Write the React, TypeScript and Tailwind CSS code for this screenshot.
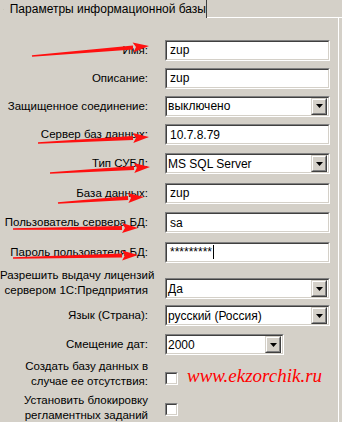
import React from "react";

// arrows drawn over the form: [x1, y1, x2, y2]
const arrows: [number, number, number, number][] = [
  [32, 56, 149, 46],
  [38, 143, 149, 137],
  [50, 173, 150, 167],
  [58, 203, 144, 197],
  [13, 229, 138, 228],
  [13, 258, 138, 255],
];

const arrowShape = ([x1, y1, x2, y2]: [number, number, number, number]) => {
  const dx = x2 - x1;
  const dy = y2 - y1;
  const len = Math.hypot(dx, dy);
  const ux = dx / len;
  const uy = dy / len;
  const nx = -uy;
  const ny = ux;
  const headLen = 16;
  const bx = x2 - ux * headLen;
  const by = y2 - uy * headLen;
  const p = (x: number, y: number) => `${x.toFixed(1)},${y.toFixed(1)}`;
  const shaft = [
    p(x1 + nx * 0.8, y1 + ny * 0.8),
    p(bx + nx * 2, by + ny * 2),
    p(bx - nx * 2, by - ny * 2),
    p(x1 - nx * 0.8, y1 - ny * 0.8),
  ].join(" ");
  const head = [p(x2, y2), p(bx + nx * 5, by + ny * 5), p(bx + ux * 3, by + uy * 3), p(bx - nx * 5, by - ny * 5)].join(" ");
  return { shaft, head };
};

const Sunken = ({ className, children }: { className: string; children?: React.ReactNode }) => (
  <div className={`border border-t-[#808080] border-l-[#808080] border-r-white border-b-white ${className}`}>
    <div className="flex h-[19px] items-center border border-t-[#404040] border-l-[#404040] border-r-[#d4d0c8] border-b-[#d4d0c8] bg-white">
      {children}
    </div>
  </div>
);

const TextField = ({ value, caret }: { value: string; caret?: boolean }) => (
  <Sunken className="w-[165px]">
    <span className="pl-[3px] text-[12px] leading-none text-[#000]">{value}</span>
    {caret && <span className="ml-px h-[14px] w-px bg-black" />}
  </Sunken>
);

const DropBtn = () => (
  <div className="mr-px flex h-[17px] w-[16px] items-center justify-center border border-t-[#d4d0c8] border-l-[#d4d0c8] border-r-[#404040] border-b-[#404040] bg-[#d4d0c8]">
    <div className="flex h-full w-full items-center justify-center border border-t-white border-l-white border-r-[#808080] border-b-[#808080]">
      <svg width="7" height="4" viewBox="0 0 7 4">
        <path d="M0 0h7L3.5 4z" fill="#000" />
      </svg>
    </div>
  </div>
);

const Select = ({ value, narrow }: { value: string; narrow?: boolean }) => (
  <Sunken className={narrow ? "w-[119px]" : "w-[165px]"}>
    <span className="flex-1 whitespace-nowrap pl-px text-[12px] leading-none">{value}</span>
    <DropBtn />
  </Sunken>
);

const Check = () => (
  <div className="h-[13px] w-[13px] border border-t-[#808080] border-l-[#808080] border-r-white border-b-white">
    <div className="h-full w-full border border-t-[#404040] border-l-[#404040] border-r-[#d4d0c8] border-b-[#d4d0c8] bg-white" />
  </div>
);

const Row = ({ h, label, children }: { h: string; label: React.ReactNode; children: React.ReactNode }) => (
  <div className={`flex items-center ${h}`}>
    <div className="w-[150px] whitespace-nowrap pr-[2px] text-right leading-[15px]">{label}</div>
    <div className="ml-[15px]">{children}</div>
  </div>
);

export default function App() {
  return (
    <div
      className="relative h-[422px] w-[342px] overflow-hidden bg-[#d4d0c8] text-[11.5px] text-black"
      style={{ fontFamily: '"Liberation Sans", Arial, sans-serif' }}
    >
      {/* tab strip */}
      <div className="flex h-[18px]">
        <div className="flex w-[207px] items-center border-r border-r-[#404040] pl-[3px]">
          <svg width="16" height="15" viewBox="0 0 16 15" className="mr-[6px]">
            <rect x="1.5" y="0.5" width="13" height="14" fill="none" stroke="#555" strokeDasharray="1 1" />
            <rect x="3" y="2" width="4" height="4" fill="#e8d83a" />
            <rect x="4" y="3" width="2" height="2" fill="#8a7a10" />
            <rect x="7" y="6" width="5" height="3" fill="#3aa0a0" />
            <rect x="3" y="9" width="4" height="4" fill="#e8d83a" />
            <rect x="8" y="9" width="4" height="4" fill="#2a6ab0" />
            <rect x="9" y="2" width="3" height="3" fill="#b8c8c8" />
          </svg>
          <span className="whitespace-nowrap text-[12px]">Параметры информационной базы</span>
        </div>
        <div className="flex-1 border-b border-b-white" />
      </div>

      <div className="mr-[3px] border-r border-r-white pt-[18px]">
        <Row h="h-[28px]" label="Имя:">
          <TextField value="zup" />
        </Row>
        <Row h="h-[28px]" label="Описание:">
          <TextField value="zup" />
        </Row>
        <Row h="h-[28px]" label="Защищенное соединение:">
          <Select value="выключено" />
        </Row>
        <Row h="h-[29px]" label="Сервер баз данных:">
          <TextField value="10.7.8.79" />
        </Row>
        <Row h="h-[29px]" label="Тип СУБД:">
          <Select value="MS SQL Server" />
        </Row>
        <Row h="h-[30px]" label="База данных:">
          <TextField value="zup" />
        </Row>
        <Row h="h-[29px]" label="Пользователь сервера БД:">
          <TextField value="sa" />
        </Row>
        <Row h="h-[30px]" label="Пароль пользователя БД:">
          <TextField value="*********" caret />
        </Row>
        <div className="flex h-[34px]">
          <div className="w-[150px] whitespace-nowrap pr-[2px] pt-[1px] text-right leading-[15px]">
            Разрешить выдачу лицензий
            <br />
            сервером 1С:Предприятия
          </div>
          <div className="ml-[15px] pt-[11px]">
            <Select value="Да" />
          </div>
        </div>
        <Row h="h-[29px]" label="Язык (Страна):">
          <Select value="русский (Россия)" />
        </Row>
        <Row h="h-[29px]" label="Смещение дат:">
          <Select value="2000" narrow />
        </Row>
        <div className="flex h-[34px]">
          <div className="w-[150px] whitespace-nowrap pr-[2px] text-right leading-[15px]">
            Создать базу данных в
            <br />
            случае ее отсутствия:
          </div>
          <div className="ml-[15px] flex items-start pt-[13px]">
            <Check />
            <span
              className="-mt-[10px] ml-[9px] whitespace-nowrap text-[19px] italic text-[#ff0000]"
              style={{ fontFamily: '"Liberation Serif", "Times New Roman", serif' }}
            >
              www.ekzorchik.ru
            </span>
          </div>
        </div>
        <div className="flex h-[30px]">
          <div className="w-[150px] whitespace-nowrap pr-[2px] text-right leading-[15px]">
            Установить блокировку
            <br />
            регламентных заданий
          </div>
          <div className="ml-[15px] pt-[10px]">
            <Check />
          </div>
        </div>
      </div>

      <svg className="pointer-events-none absolute left-0 top-0" width="342" height="422">
        {arrows.map((a, i) => {
          const { shaft, head } = arrowShape(a);
          return (
            <g key={i} fill="#ff1010">
              <polygon points={shaft} />
              <polygon points={head} />
            </g>
          );
        })}
      </svg>
    </div>
  );
}
